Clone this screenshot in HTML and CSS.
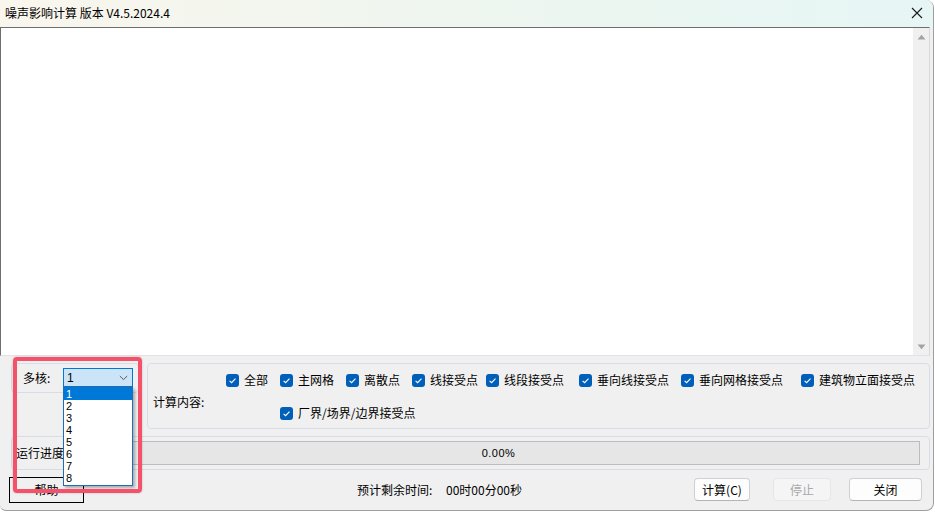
FILE: index.html
```html
<!DOCTYPE html>
<html lang="zh">
<head>
<meta charset="utf-8">
<title>噪声影响计算</title>
<link rel="stylesheet" href="styles.css">
</head>
<body>
<div class="window">
  <div class="titlebar">
    <span class="title">噪声影响计算 版本 V4.5.2024.4</span>
    <svg class="close" width="12" height="12" viewBox="0 0 12 12"><path d="M1 1L11 11M11 1L1 11" stroke="#1a1a1a" stroke-width="1.1" fill="none"/></svg>
  </div>
  <div class="log">
    <div class="log-body"></div>
    <div class="scrollbar">
      <svg class="arrow" width="9" height="6" viewBox="0 0 9 6"><path d="M0.5 5.5L4.5 0.8L8.5 5.5Z" fill="#a3a3a3"/></svg>
      <svg class="arrow" width="9" height="6" viewBox="0 0 9 6"><path d="M0.5 0.5L4.5 5.2L8.5 0.5Z" fill="#a3a3a3"/></svg>
    </div>
  </div>
  <div class="panel">
    <div class="top-row">
      <div class="group cores">
        <span class="cores-label">多核:</span>
        <div class="combo">
          <span>1</span>
          <svg width="9" height="6" viewBox="0 0 9 6"><path d="M0.8 1L4.5 4.6L8.2 1" stroke="#5a5a5a" stroke-width="1" fill="none"/></svg>
        </div>
      </div>
      <div class="group content">
        <span class="content-label">计算内容:</span>
        <div class="checks">
          <label class="check c1"><svg class="box" width="13" height="13" viewBox="0 0 13 13"><rect width="13" height="13" rx="3" fill="#005fb8"/><path d="M3.6 6.8L5.6 8.7L9.5 4.6" stroke="#fff" stroke-width="1.1" fill="none"/></svg>全部</label>
          <label class="check c2"><svg class="box" width="13" height="13" viewBox="0 0 13 13"><rect width="13" height="13" rx="3" fill="#005fb8"/><path d="M3.6 6.8L5.6 8.7L9.5 4.6" stroke="#fff" stroke-width="1.1" fill="none"/></svg>主网格</label>
          <label class="check c3"><svg class="box" width="13" height="13" viewBox="0 0 13 13"><rect width="13" height="13" rx="3" fill="#005fb8"/><path d="M3.6 6.8L5.6 8.7L9.5 4.6" stroke="#fff" stroke-width="1.1" fill="none"/></svg>离散点</label>
          <label class="check c4"><svg class="box" width="13" height="13" viewBox="0 0 13 13"><rect width="13" height="13" rx="3" fill="#005fb8"/><path d="M3.6 6.8L5.6 8.7L9.5 4.6" stroke="#fff" stroke-width="1.1" fill="none"/></svg>线接受点</label>
          <label class="check c5"><svg class="box" width="13" height="13" viewBox="0 0 13 13"><rect width="13" height="13" rx="3" fill="#005fb8"/><path d="M3.6 6.8L5.6 8.7L9.5 4.6" stroke="#fff" stroke-width="1.1" fill="none"/></svg>线段接受点</label>
          <label class="check c6"><svg class="box" width="13" height="13" viewBox="0 0 13 13"><rect width="13" height="13" rx="3" fill="#005fb8"/><path d="M3.6 6.8L5.6 8.7L9.5 4.6" stroke="#fff" stroke-width="1.1" fill="none"/></svg>垂向线接受点</label>
          <label class="check c7"><svg class="box" width="13" height="13" viewBox="0 0 13 13"><rect width="13" height="13" rx="3" fill="#005fb8"/><path d="M3.6 6.8L5.6 8.7L9.5 4.6" stroke="#fff" stroke-width="1.1" fill="none"/></svg>垂向网格接受点</label>
          <label class="check c8"><svg class="box" width="13" height="13" viewBox="0 0 13 13"><rect width="13" height="13" rx="3" fill="#005fb8"/><path d="M3.6 6.8L5.6 8.7L9.5 4.6" stroke="#fff" stroke-width="1.1" fill="none"/></svg>建筑物立面接受点</label>
          <label class="check c9"><svg class="box" width="13" height="13" viewBox="0 0 13 13"><rect width="13" height="13" rx="3" fill="#005fb8"/><path d="M3.6 6.8L5.6 8.7L9.5 4.6" stroke="#fff" stroke-width="1.1" fill="none"/></svg>厂界/场界/边界接受点</label>
        </div>
      </div>
    </div>
    <div class="group progress">
      <span class="progress-label">运行进度:</span>
      <div class="bar">0.00%</div>
    </div>
    <div class="footer">
      <button class="help">帮助</button>
      <span class="time-label">预计剩余时间:</span>
      <span class="time-value">00时00分00秒</span>
      <div class="actions">
        <button class="btn calc">计算(C)</button>
        <button class="btn stop" disabled>停止</button>
        <button class="btn close-btn">关闭</button>
      </div>
    </div>
  </div>
  <ul class="dropdown">
    <li class="selected">1</li>
    <li>2</li>
    <li>3</li>
    <li>4</li>
    <li>5</li>
    <li>6</li>
    <li>7</li>
    <li>8</li>
  </ul>
  <div class="highlight"></div>
</div>
</body>
</html>
```
FILE: styles.css
```css
* { box-sizing: border-box; }
html, body {
  margin: 0;
  padding: 0;
  background: #ffffff;
}
body {
  font-family: "Noto Sans CJK SC", "Noto Sans", sans-serif;
  font-size: 12px;
  color: #000;
}
.window {
  position: relative;
  width: 934px;
  height: 511px;
  background: #f0f0f0;
  border-right: 1px solid #9e9e9e;
  border-bottom: 1px solid #9e9e9e;
  border-radius: 0 8px 8px 6px;
  overflow: hidden;
}
.titlebar {
  height: 27px;
  display: flex;
  align-items: center;
  justify-content: space-between;
  padding: 0 10px 0 5px;
  background: linear-gradient(to right, #f9f6ed, #eef6ef 50%, #e6f6f5);
}
.title {
  line-height: 16px;
  font-size: 12px;
  margin-top: -2px;
}
.close {
  display: block;
  margin-top: -1px;
}
.log {
  height: 329px;
  width: 930px;
  display: flex;
  background: #fff;
  border-top: 1px solid #6e6e6e;
  border-left: 1px solid #6e6e6e;
  border-right: 1px solid #dadada;
  border-bottom: 1px solid #e2e2e2;
}
.log-body { flex: 1; }
.scrollbar {
  width: 16px;
  background: #f0f0f0;
  display: flex;
  flex-direction: column;
  justify-content: space-between;
  align-items: center;
  padding: 6px 0 5px;
}
.arrow { display: block; }
.panel {
  display: flex;
  flex-direction: column;
}
.top-row {
  display: flex;
  gap: 8px;
  padding: 7px 3px 0 11px;
  align-items: flex-start;
}
.group {
  border: 1px solid #d6dde6;
  border-radius: 4px;
}
.cores {
  width: 128px;
  height: 30px;
  display: flex;
  align-items: flex-start;
  padding: 4px 0 0 11px;
}
.cores-label {
  width: 40px;
  line-height: 19px;
}
.combo {
  width: 70px;
  height: 19px;
  background: #cce4f7;
  border: 1px solid #0078d4;
  display: flex;
  align-items: center;
  justify-content: space-between;
  padding: 0 4px 0 3px;
  font-family: "Liberation Sans", sans-serif;
  font-size: 12px;
}
.content {
  flex: 1;
  height: 66px;
  display: flex;
  align-items: flex-start;
  padding-left: 5px;
}
.content-label {
  width: 73px;
  line-height: 16px;
  margin-top: 30px;
}
.checks {
  flex: 1;
  display: flex;
  flex-wrap: wrap;
  row-gap: 17px;
  padding-top: 8px;
}
.check {
  display: flex;
  align-items: center;
  gap: 5px;
  line-height: 16px;
  height: 16px;
  white-space: nowrap;
}
.box { display: block; flex: none; }
.c1 { width: 54px; }
.c2 { width: 66px; }
.c3 { width: 66px; }
.c4 { width: 74px; }
.c5 { width: 93px; }
.c6 { width: 102px; }
.c7 { width: 120px; }
.c8 { width: 120px; }
.c9 { margin-left: 54px; }
.progress {
  margin: 7px 3px 0 11px;
  height: 34px;
  display: flex;
  align-items: center;
  padding: 0 9px 0 4px;
}
.progress-label {
  width: 61px;
  line-height: 16px;
}
.bar {
  flex: 1;
  height: 24px;
  background: #e6e6e6;
  border: 1px solid #bcbcbc;
  display: flex;
  align-items: center;
  justify-content: center;
  font-family: "Liberation Sans", sans-serif;
  font-size: 11px;
  letter-spacing: 0.5px;
}
.footer {
  height: 39px;
  display: flex;
  align-items: center;
  padding: 0 11px 0 9px;
}
button {
  font-family: "Noto Sans CJK SC", "Noto Sans", sans-serif;
  font-size: 12px;
  color: #000;
  padding: 0;
  line-height: 16px;
}
.help {
  width: 75px;
  height: 26px;
  background: #f0f0f0;
  border: 1px solid #000;
  border-radius: 0;
}
.time-label {
  margin-left: 273px;
  width: 89px;
}
.time-value {
  font-size: 12px;
}
.actions {
  margin-left: auto;
  display: flex;
  gap: 0;
}
.btn {
  height: 23px;
  background: #fdfdfd;
  border: 1px solid #d0d0d0;
  border-bottom-color: #b4b4b4;
  border-radius: 4px;
}
.calc { width: 56px; }
.stop {
  width: 58px;
  margin-left: 23px;
  background: #f5f5f5;
  border-color: #e6e6e6;
  color: #a8a8a8;
}
.close-btn {
  width: 73px;
  margin-left: 18px;
}
.dropdown {
  position: absolute;
  left: 63px;
  top: 387px;
  width: 70px;
  height: 99px;
  margin: 0;
  padding: 0;
  list-style: none;
  background: #fff;
  border: 1px solid #1f6fb8;
  box-shadow: 2px 2px 3px rgba(0, 0, 0, 0.3);
  font-family: "Liberation Sans", sans-serif;
  font-size: 11px;
}
.dropdown li {
  height: 12px;
  line-height: 12px;
  padding-left: 2px;
  overflow: hidden;
}
.dropdown li.selected {
  background: #0078d7;
  color: #fff;
}
.highlight {
  position: absolute;
  left: 13px;
  top: 357px;
  width: 129px;
  height: 136px;
  border: 4px solid #f4526a;
  border-radius: 4px;
  box-shadow: 0 0 2px rgba(0, 0, 0, 0.25);
}
```
